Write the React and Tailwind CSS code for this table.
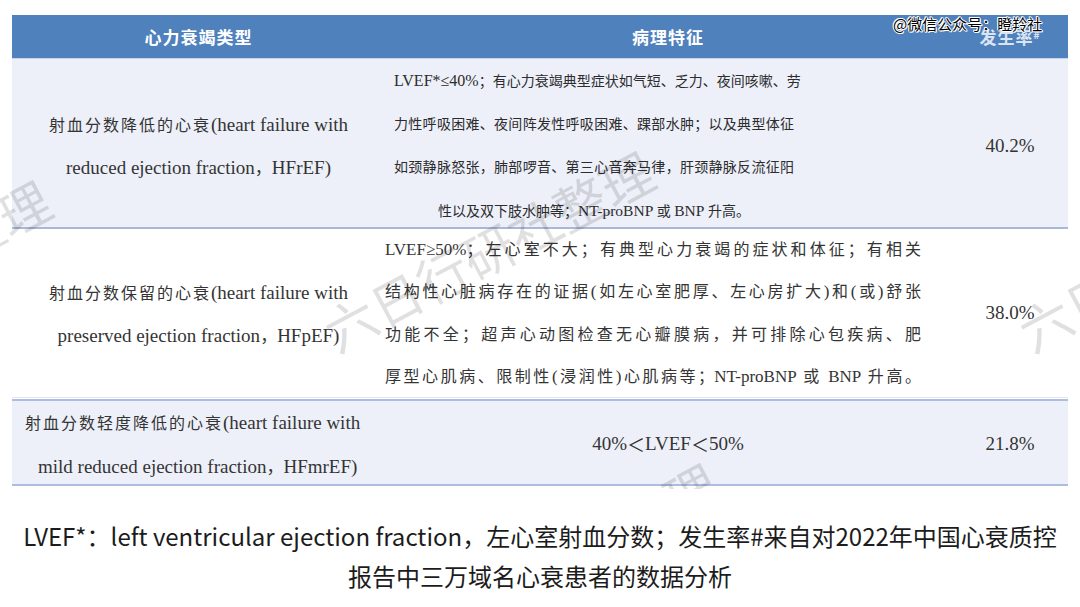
import React from "react";

const SERIF = { fontFamily: '"Liberation Serif", "Noto Sans CJK SC", serif' };
const SANS = { fontFamily: '"Noto Sans CJK SC", "Noto Sans", sans-serif' };

function Cj({ children, cls = "text-[16px] tracking-[2px]" }) {
  return <span className={cls} style={SANS}>{children}</span>;
}

function JLine({ children, last }) {
  return (
    <div
      className={
        last
          ? "whitespace-nowrap text-center"
          : "whitespace-nowrap text-justify [text-align-last:justify]"
      }
    >
      {children}
    </div>
  );
}

const WM = "六日行研社整理";

function Watermark({ x0, y0, dx = 46, dy = -24 }) {
  return (
    <>
      {WM.split("").map((c, i) => (
        <span
          key={i}
          className="absolute w-[52px] h-[52px] flex items-center justify-center text-[52px] leading-none text-black/[0.12] -rotate-[28deg]"
          style={{ ...SANS, left: x0 + dx * i - 26, top: y0 + dy * i - 26 }}
        >
          {c}
        </span>
      ))}
    </>
  );
}

export default function App() {
  return (
    <div className="w-[1080px] h-[607px] bg-white relative overflow-hidden text-[#343434]">
      <div className="pt-[15px] px-[12px]" style={SERIF}>
        {/* header */}
        <div className="grid grid-cols-[373px_566px_118px] h-[44px] bg-[#4f81bd] text-white items-center border-b border-[#c9d3ea]">
          <div className="text-center font-bold text-[17px] tracking-[1px]" style={SANS}>心力衰竭类型</div>
          <div className="text-center font-bold text-[17px] tracking-[1px]" style={SANS}>病理特征</div>
          <div className="text-center font-bold text-[17px] tracking-[1px] text-[#dbe4f3]" style={SANS}>
            发生率<sup className="text-[10px]">#</sup>
          </div>
        </div>

        {/* row 1 */}
        <div className="grid grid-cols-[373px_566px_118px] h-[170px] bg-[#edf0f9] border-b-2 border-[#a9b7d9]">
          <div className="flex flex-col items-center justify-center leading-[42px] text-[19px]">
            <div className="whitespace-nowrap"><Cj>射血分数降低的心衰</Cj>(heart failure with</div>
            <div className="whitespace-nowrap">reduced ejection fraction<Cj cls="text-[17px]">，</Cj>HFrEF)</div>
          </div>
          <div className="flex items-center">
            <div className="ml-[9px] w-[400px] leading-[43px] text-[14px] text-[#2c2c2c]">
              <JLine><span className="text-[16px]">LVEF*≤40%</span>；有心力衰竭典型症状如气短、乏力、夜间咳嗽、劳</JLine>
              <JLine>力性呼吸困难、夜间阵发性呼吸困难、踝部水肿；以及典型体征</JLine>
              <JLine>如颈静脉怒张，肺部啰音、第三心音奔马律，肝颈静脉反流征阳</JLine>
              <JLine last>性以及双下肢水肿等；<span className="text-[15.5px]">NT-proBNP</span> 或 <span className="text-[15.5px]">BNP</span> 升高。</JLine>
            </div>
          </div>
          <div className="flex items-center justify-center text-[19px]">40.2%</div>
        </div>

        {/* row 2 */}
        <div className="grid grid-cols-[373px_566px_118px] h-[169px] bg-white border-b border-[#e2e7f3]">
          <div className="flex flex-col items-center justify-center leading-[42px] text-[19px]">
            <div className="whitespace-nowrap"><Cj>射血分数保留的心衰</Cj>(heart failure with</div>
            <div className="whitespace-nowrap">preserved ejection fraction<Cj cls="text-[17px]">，</Cj>HFpEF)</div>
          </div>
          <div className="flex items-center">
            <div className="w-[536px] leading-[42.3px] text-[16px]">
              <JLine><span className="text-[17px]">LVEF≥50%</span>；左心室不大；有典型心力衰竭的症状和体征；有相关</JLine>
              <JLine>结构性心脏病存在的证据<span className="text-[17px]">(</span>如左心室肥厚、左心房扩大<span className="text-[17px]">)</span>和<span className="text-[17px]">(</span>或<span className="text-[17px]">)</span>舒张</JLine>
              <JLine>功能不全；超声心动图检查无心瓣膜病，并可排除心包疾病、肥</JLine>
              <JLine>厚型心肌病、限制性<span className="text-[17px]">(</span>浸润性<span className="text-[17px]">)</span>心肌病等；<span className="text-[17px]">NT-proBNP</span> 或 <span className="text-[17px]">BNP</span> 升高。</JLine>
            </div>
          </div>
          <div className="flex items-center justify-center text-[19px]">38.0%</div>
        </div>

        {/* row 3 */}
        <div className="mt-[1px] grid grid-cols-[373px_566px_118px] h-[87px] bg-[#edf0f9] border-t-2 border-b-2 border-[#adbde0]">
          <div className="flex flex-col justify-center leading-[43px] text-[19px] pl-[13px]">
            <div className="whitespace-nowrap"><Cj>射血分数轻度降低的心衰</Cj>(heart failure with</div>
            <div className="whitespace-nowrap pl-[13px]">mild reduced ejection fraction<Cj cls="text-[17px]">，</Cj>HFmrEF)</div>
          </div>
          <div className="flex items-center justify-center text-[19px] whitespace-nowrap">
            40%<Cj cls="text-[18px]">＜</Cj>LVEF<Cj cls="text-[18px]">＜</Cj>50%
          </div>
          <div className="flex items-center justify-center text-[19px]">21.8%</div>
        </div>
      </div>

      {/* caption */}
      <div className="mt-[30px] text-center text-[24px] leading-[40px] text-[#1c1c1c]" style={SANS}>
        <div className="whitespace-nowrap">LVEF*：left ventricular ejection fraction，左心室射血分数；发生率#来自对2022年中国心衰质控</div>
        <div className="whitespace-nowrap">报告中三万域名心衰患者的数据分析</div>
      </div>

      {/* watermarks over table */}
      <div className="absolute left-0 top-0 w-[1080px] h-[489px] overflow-hidden pointer-events-none">
        <Watermark x0={350} y0={322} />
        <Watermark x0={-253} y0={351} />
        <Watermark x0={1045} y0={322} />
        <Watermark x0={414} y0={634} />
      </div>

      {/* wechat watermark */}
      <div
        className="absolute left-[893px] top-[13px] text-[15px] leading-[22px] text-black whitespace-nowrap [text-shadow:1px_0_0_#fff,-1px_0_0_#fff,0_1px_0_#fff,0_-1px_0_#fff,1px_1px_0_#fff,-1px_-1px_0_#fff]"
        style={SANS}
      >
        @微信公众号：瞪羚社
      </div>
    </div>
  );
}
